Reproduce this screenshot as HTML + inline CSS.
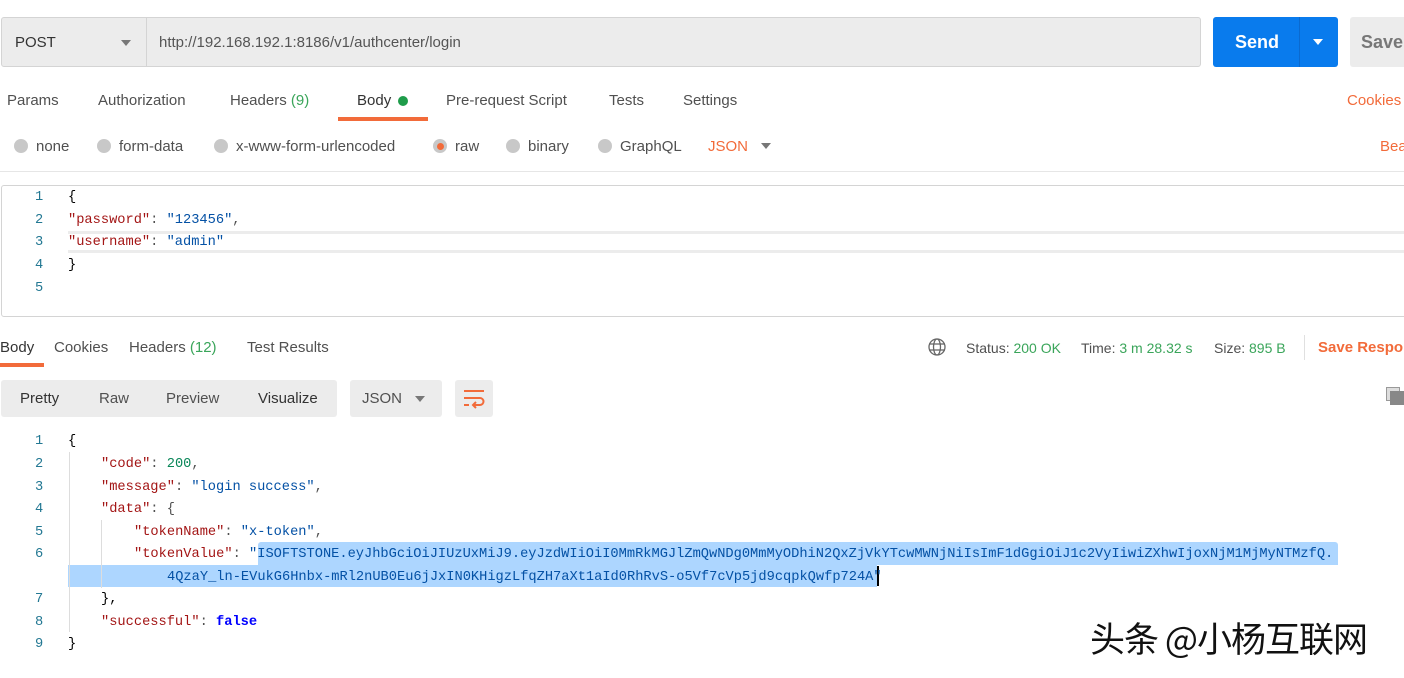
<!DOCTYPE html>
<html><head><meta charset="utf-8"><style>
body{margin:0;width:1404px;height:678px;background:#fff;overflow:hidden;position:relative;font-family:"Liberation Sans",sans-serif;color:#505050}
.t{position:absolute;white-space:nowrap;font-size:15px;line-height:20px}
.m{position:absolute;white-space:nowrap;font-family:"Liberation Mono",monospace;font-size:13.7px;line-height:20px}
.k{color:#a31515}.s{color:#0451a5}.n{color:#098658}.ln{color:#237893}
.g{color:#3aa55a}.o{color:#f26b3a}
.rad{position:absolute;width:14px;height:14px;border-radius:50%;background:#c8c8c8}
</style></head><body>
<div style="position:absolute;left:1px;top:17px;width:1198px;height:48px;background:#ececec;border:1px solid #d4d4d4;border-radius:3px"></div>
<div style="position:absolute;left:146px;top:18px;width:1px;height:48px;background:#d4d4d4"></div>
<div class="t" style="left:15px;top:33px;color:#333">POST</div>
<div style="position:absolute;left:121px;top:40px;border-left:5px solid transparent;border-right:5px solid transparent;border-top:6px solid #777"></div>
<div class="t" style="left:159px;top:33px;color:#555">http://192.168.192.1:8186/v1/authcenter/login</div>
<div style="position:absolute;left:1213px;top:17px;width:125px;height:50px;background:#097bed;border-radius:3px"></div>
<div style="position:absolute;left:1299px;top:17px;width:1px;height:50px;background:#0a6ad0"></div>
<div class="t" style="left:1235px;top:31px;color:#fff;font-weight:bold;font-size:18px;line-height:22px">Send</div>
<div style="position:absolute;left:1313px;top:39px;border-left:5px solid transparent;border-right:5px solid transparent;border-top:6px solid #fff"></div>
<div style="position:absolute;left:1350px;top:17px;width:60px;height:50px;background:#ececec;border-radius:3px"></div>
<div class="t" style="left:1361px;top:31px;color:#777;font-weight:bold;font-size:18px;line-height:22px">Save</div>
<div class="t" style="left:7px;top:91px">Params</div>
<div class="t" style="left:98px;top:91px">Authorization</div>
<div class="t" style="left:230px;top:91px">Headers <span class="g">(9)</span></div>
<div class="t" style="left:357px;top:91px;color:#333">Body</div>
<div style="position:absolute;left:398px;top:96px;width:10px;height:10px;border-radius:50%;background:#1e9c4a"></div>
<div style="position:absolute;left:338px;top:117px;width:90px;height:4px;background:#f26b3a"></div>
<div class="t" style="left:446px;top:91px">Pre-request Script</div>
<div class="t" style="left:609px;top:91px">Tests</div>
<div class="t" style="left:683px;top:91px">Settings</div>
<div class="t o" style="left:1347px;top:91px">Cookies</div>
<div class="rad" style="left:14px;top:139px"></div><div class="t" style="left:36px;top:137px">none</div>
<div class="rad" style="left:97px;top:139px"></div><div class="t" style="left:119px;top:137px">form-data</div>
<div class="rad" style="left:214px;top:139px"></div><div class="t" style="left:236px;top:137px">x-www-form-urlencoded</div>
<div class="rad" style="left:433px;top:139px"></div><div style="position:absolute;left:437px;top:143px;width:7px;height:7px;border-radius:50%;background:#f26b3a"></div><div class="t" style="left:455px;top:137px">raw</div>
<div class="rad" style="left:506px;top:139px"></div><div class="t" style="left:528px;top:137px">binary</div>
<div class="rad" style="left:598px;top:139px"></div><div class="t" style="left:620px;top:137px">GraphQL</div>
<div class="t o" style="left:708px;top:137px">JSON</div>
<div style="position:absolute;left:761px;top:143px;border-left:5px solid transparent;border-right:5px solid transparent;border-top:6px solid #777"></div>
<div class="t o" style="left:1380px;top:137px">Bea</div>
<div style="position:absolute;left:0;top:171px;width:1404px;height:1px;background:#e6e6e6"></div>
<div style="position:absolute;left:1px;top:185px;width:1410px;height:130px;border:1px solid #d4d4d4;border-radius:3px"></div>
<div style="position:absolute;left:68px;top:231px;width:1340px;height:3px;background:#ececec"></div>
<div style="position:absolute;left:68px;top:250px;width:1340px;height:3px;background:#ececec"></div>
<div class="m ln" style="left:35px;top:188px">1</div><div class="m" style="left:68px;top:188px;color:#000">{</div>
<div class="m ln" style="left:35px;top:211px">2</div><div class="m" style="left:68px;top:211px"><span class="k">"password"</span>: <span class="s">"123456"</span>,</div>
<div class="m ln" style="left:35px;top:233px">3</div><div class="m" style="left:68px;top:233px"><span class="k">"username"</span>: <span class="s">"admin"</span></div>
<div class="m ln" style="left:35px;top:256px">4</div><div class="m" style="left:68px;top:256px;color:#000">}</div>
<div class="m ln" style="left:35px;top:279px">5</div>
<div class="t" style="left:0;top:338px;color:#333">Body</div>
<div style="position:absolute;left:0;top:363px;width:44px;height:4px;background:#f26b3a"></div>
<div class="t" style="left:54px;top:338px">Cookies</div>
<div class="t" style="left:129px;top:338px">Headers <span class="g">(12)</span></div>
<div class="t" style="left:247px;top:338px">Test Results</div>
<svg style="position:absolute;left:928px;top:338px" width="18" height="18" viewBox="0 0 18 18" fill="none" stroke="#666" stroke-width="1.3"><circle cx="9" cy="9" r="8"/><ellipse cx="9" cy="9" rx="3.5" ry="8"/><line x1="1" y1="6" x2="17" y2="6"/><line x1="1" y1="12" x2="17" y2="12"/></svg>
<div class="t" style="left:966px;top:338px;font-size:14px">Status: <span class="g">200 OK</span></div>
<div class="t" style="left:1081px;top:338px;font-size:14px">Time: <span class="g">3 m 28.32 s</span></div>
<div class="t" style="left:1214px;top:338px;font-size:14px">Size: <span class="g">895 B</span></div>
<div style="position:absolute;left:1304px;top:335px;width:1px;height:25px;background:#e0e0e0"></div>
<div class="t o" style="left:1318px;top:338px;font-weight:bold">Save Respon</div>
<div style="position:absolute;left:1px;top:380px;width:336px;height:37px;background:#ececec;border-radius:3px"></div>
<div class="t" style="left:20px;top:389px;color:#333">Pretty</div>
<div class="t" style="left:99px;top:389px">Raw</div>
<div class="t" style="left:166px;top:389px">Preview</div>
<div class="t" style="left:258px;top:389px;color:#333">Visualize</div>
<div style="position:absolute;left:350px;top:380px;width:92px;height:37px;background:#ececec;border-radius:3px"></div>
<div class="t" style="left:362px;top:389px">JSON</div>
<div style="position:absolute;left:415px;top:396px;border-left:5px solid transparent;border-right:5px solid transparent;border-top:6px solid #777"></div>
<div style="position:absolute;left:455px;top:380px;width:38px;height:37px;background:#ececec;border-radius:3px"></div>
<svg style="position:absolute;left:462px;top:388px" width="24" height="22" viewBox="0 0 24 22" fill="none" stroke="#f26b3a" stroke-width="2"><line x1="2" y1="3" x2="22" y2="3"/><path d="M2 10H18a3 3 0 0 1 0 7H12"/><path d="M14 14l-3 3 3 3"/><line x1="2" y1="17" x2="7" y2="17"/></svg>
<div style="position:absolute;left:1386px;top:387px;width:12px;height:12px;border:1px solid #999;background:#ddd"></div>
<div style="position:absolute;left:1390px;top:391px;width:14px;height:14px;background:#888"></div>
<div style="position:absolute;left:258px;top:542px;width:1080px;height:23px;background:#add6ff;border-radius:3px 3px 0 0"></div>
<div style="position:absolute;left:68px;top:565px;width:809px;height:22px;background:#add6ff"></div>
<div style="position:absolute;left:69px;top:452px;width:1px;height:180px;background:#ddd"></div>
<div style="position:absolute;left:101px;top:520px;width:1px;height:68px;background:#ddd"></div>
<div style="position:absolute;left:877px;top:566px;width:2px;height:20px;background:#000"></div>
<div class="m ln" style="left:35px;top:432px">1</div><div class="m" style="left:68px;top:432px;color:#000">{</div>
<div class="m ln" style="left:35px;top:455px">2</div><div class="m" style="left:101px;top:455px"><span class="k">"code"</span>: <span class="n">200</span>,</div>
<div class="m ln" style="left:35px;top:478px">3</div><div class="m" style="left:101px;top:478px"><span class="k">"message"</span>: <span class="s">"login success"</span>,</div>
<div class="m ln" style="left:35px;top:500px">4</div><div class="m" style="left:101px;top:500px"><span class="k">"data"</span>: {</div>
<div class="m ln" style="left:35px;top:523px">5</div><div class="m" style="left:134px;top:523px"><span class="k">"tokenName"</span>: <span class="s">"x-token"</span>,</div>
<div class="m ln" style="left:35px;top:545px">6</div><div class="m" style="left:134px;top:545px"><span class="k">"tokenValue"</span>: <span class="s">"ISOFTSTONE.eyJhbGciOiJIUzUxMiJ9.eyJzdWIiOiI0MmRkMGJlZmQwNDg0MmMyODhiN2QxZjVkYTcwMWNjNiIsImF1dGgiOiJ1c2VyIiwiZXhwIjoxNjM1MjMyNTMzfQ.</span></div>
<div class="m s" style="left:167px;top:568px">4QzaY_ln-EVukG6Hnbx-mRl2nUB0Eu6jJxIN0KHigzLfqZH7aXt1aId0RhRvS-o5Vf7cVp5jd9cqpkQwfp724A"</div>
<div class="m ln" style="left:35px;top:590px">7</div><div class="m" style="left:101px;top:590px;color:#000">},</div>
<div class="m ln" style="left:35px;top:613px">8</div><div class="m" style="left:101px;top:613px"><span class="k">"successful"</span>: <b style="color:#0000ff">false</b></div>
<div class="m ln" style="left:35px;top:635px">9</div><div class="m" style="left:68px;top:635px;color:#000">}</div>
<div style="position:absolute;left:1090px;top:614px;font-family:'Noto Sans CJK SC',sans-serif;font-size:35px;line-height:48px;letter-spacing:-1px;color:#111;text-shadow:1px 1px 0 #fff,-1px -1px 0 #fff;white-space:nowrap">头条 @小杨互联网</div>
</body></html>
